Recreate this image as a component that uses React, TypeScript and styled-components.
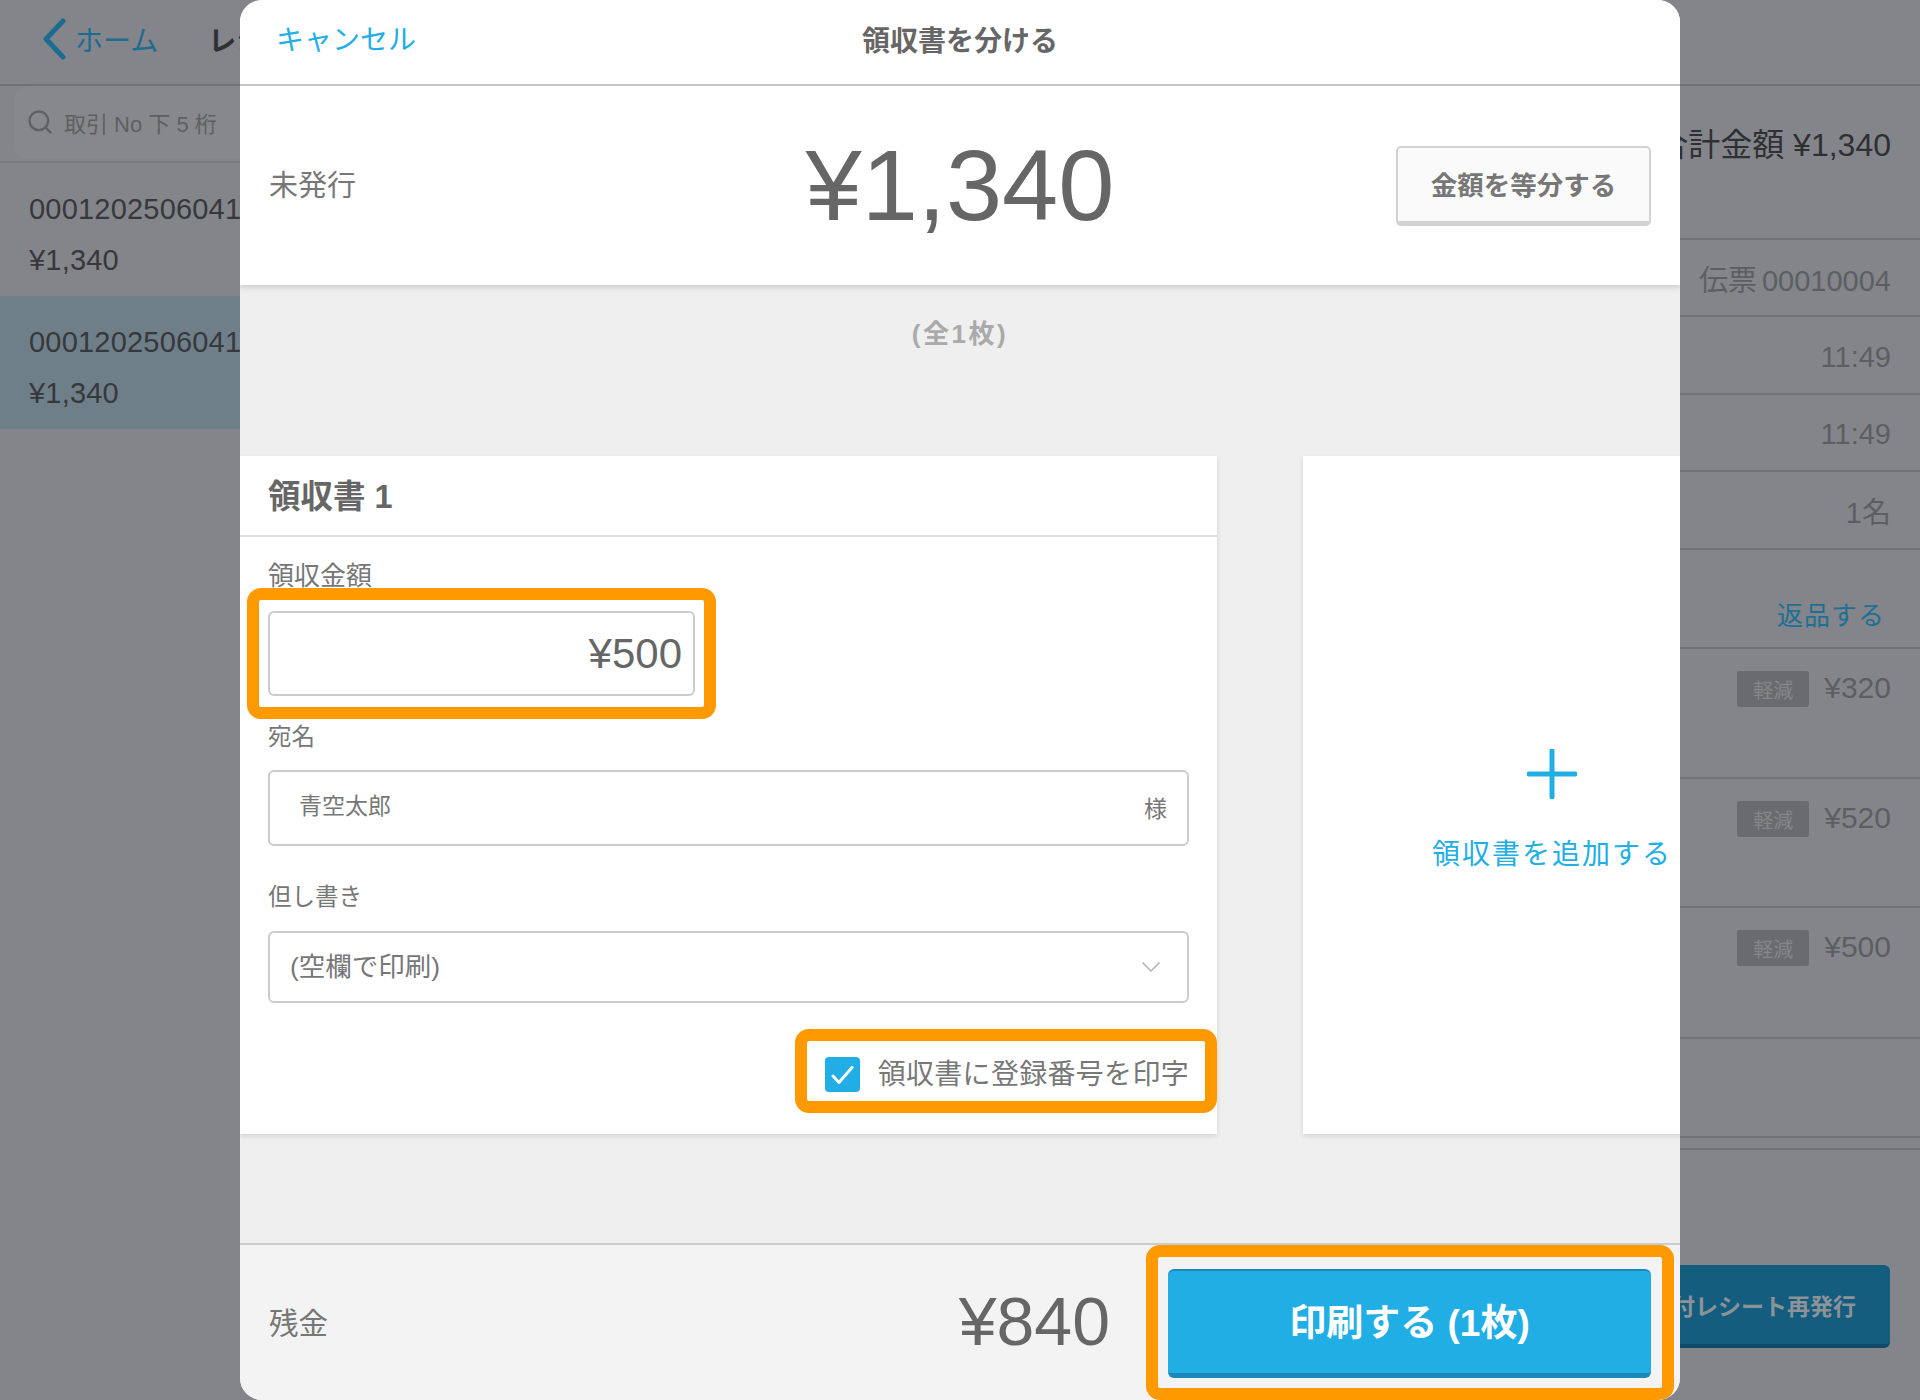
import React from 'react';
import styled, { createGlobalStyle } from 'styled-components';
import { ChevronDown, Search } from 'lucide-react';

const FONT = '"Liberation Sans", "Noto Sans CJK JP", sans-serif';
const BLUE = '#20aee5';
const ORANGE = '#ff9900';

const GlobalStyle = createGlobalStyle`
    html, body {
        margin: 0;
        padding: 0;
        background: #84858a;
        font-family: ${FONT};
    }
    * {
        box-sizing: border-box;
    }
`;

const Screen = styled.div`
    position: relative;
    width: 1920px;
    height: 1400px;
    overflow: hidden;
    display: grid;
    grid-template-columns: 240px 1fr;
    grid-template-rows: 86px 1fr;
    background: #84858a;
`;

const TopBar = styled.div`
    grid-column: 1 / 3;
    display: flex;
    align-items: center;
    padding: 0 0 6px 41px;
    border-bottom: 2px solid #707175;
    font-size: 28px;
`;

const BackLink = styled.div`
    display: flex;
    align-items: center;
    gap: 8px;
    color: #1b6c90;
`;

const BackTitle = styled.div`
    margin-left: 50px;
    font-weight: 700;
    color: #303134;
`;

const Sidebar = styled.div`
    display: flex;
    flex-direction: column;
    overflow: hidden;
`;

const SearchRow = styled.div`
    flex: none;
    height: 77px;
    padding: 1px 0 2px 15px;
    border-bottom: 2px solid #7a7b7f;
`;

const SearchField = styled.div`
    width: 400px;
    height: 100%;
    display: flex;
    align-items: center;
    gap: 10px;
    padding: 0 0 2px 11px;
    border-radius: 10px;
    background: #87888c;
    color: #5e5f62;
    font-size: 22px;
    white-space: nowrap;
`;

const SaleRow = styled.div<{ $selected?: boolean }>`
    flex: none;
    height: 133px;
    padding: 21px 0 0 29px;
    white-space: nowrap;
    font-size: 29px;
    line-height: 51px;
    letter-spacing: 0.2px;
    color: #37383b;
    background: ${props => (props.$selected ? '#6f7f8a' : 'transparent')};
`;

const Detail = styled.div`
    display: flex;
    flex-direction: column;
`;

const DetailRow = styled.div<{ $height: number; $dim?: boolean; $top?: boolean; $shift?: number }>`
    flex: none;
    height: ${props => props.$height}px;
    display: flex;
    justify-content: flex-end;
    align-items: ${props => (props.$top ? 'flex-start' : 'center')};
    gap: 15px;
    padding: ${props => (props.$top ? '22px 29px 0 0' : `${props.$shift ?? 0}px 29px 0 0`)};
    border-bottom: 2px solid #717276;
    font-size: ${props => (props.$top ? 30 : 29)}px;
    word-spacing: -3px;
    color: ${props => (props.$dim ? '#5d5e62' : '#2f3033')};
`;

const TotalText = styled.div`
    font-size: 32px;
    word-spacing: 0;
    margin-bottom: 40px;
`;

const ReturnLink = styled.div`
    color: #1f6f94;
    font-size: 26px;
    letter-spacing: 1px;
    margin-top: 30px;
    padding-right: 6px;
`;

const TaxBadge = styled.div`
    width: 72px;
    height: 36px;
    display: flex;
    align-items: center;
    justify-content: center;
    border-radius: 3px;
    background: #696b6f;
    color: #85868a;
    font-size: 20px;
`;

const Reissue = styled.div`
    align-self: flex-end;
    width: 600px;
    height: 83px;
    margin: 115px 30px 0 0;
    display: flex;
    align-items: center;
    justify-content: flex-end;
    padding-right: 34px;
    border-radius: 6px;
    background: #155d7f;
    border-bottom: 4px solid #10496a;
    color: #8b9298;
    font-size: 23px;
    font-weight: 700;
`;

const Modal = styled.div`
    position: absolute;
    top: 0;
    left: 240px;
    width: 1440px;
    height: 1400px;
    display: flex;
    flex-direction: column;
    overflow: hidden;
    border-radius: 22px;
    background: #efefef;
`;

const ModalHeader = styled.div`
    position: relative;
    flex: none;
    height: 86px;
    display: flex;
    align-items: center;
    justify-content: center;
    background: #fff;
    border-bottom: 2px solid #cbcbcb;
`;

const CancelLink = styled.div`
    position: absolute;
    left: 36px;
    top: 21px;
    color: ${BLUE};
    font-size: 28px;
    line-height: 40px;
`;

const ModalTitle = styled.div`
    font-size: 28px;
    font-weight: 700;
    color: #666;
    margin-top: -6px;
`;

const Summary = styled.div`
    flex: none;
    height: 199px;
    display: grid;
    grid-template-columns: 1fr auto 1fr;
    align-items: center;
    padding: 0 29px;
    background: #fff;
    box-shadow: 0 2px 6px rgba(0, 0, 0, 0.16);
    z-index: 1;
`;

const SummaryLabel = styled.div`
    font-size: 29px;
    color: #777;
    margin-top: -5px;
`;

const SummaryAmount = styled.div`
    font-size: 101px;
    line-height: 1;
    color: #666;
`;

const SplitButton = styled.div`
    justify-self: end;
    width: 255px;
    height: 80px;
    display: flex;
    align-items: center;
    justify-content: center;
    padding-bottom: 2px;
    border: 2px solid #d2d2d2;
    border-bottom-width: 5px;
    border-radius: 5px;
    background: #fafafa;
    color: #777;
    font-size: 26.5px;
    font-weight: 700;
`;

const SheetCount = styled.div`
    flex: none;
    height: 98px;
    padding-top: 31px;
    text-align: center;
    font-size: 26px;
    line-height: 36px;
    letter-spacing: 2.5px;
    font-weight: 700;
    color: #aaa;
`;

const Sheets = styled.div`
    flex: none;
    height: 73px;
`;

const CardRow = styled.div`
    flex: none;
    height: 678px;
    display: flex;
    gap: 86px;
`;

const ReceiptCard = styled.div`
    flex: none;
    width: 977px;
    background: #fff;
    box-shadow: 0 2px 5px rgba(0, 0, 0, 0.12);
`;

const CardTitle = styled.div`
    height: 81px;
    display: flex;
    align-items: center;
    padding: 0 0 4px 28px;
    border-bottom: 2px solid #ddd;
    color: #666;
    font-size: 32.5px;
    font-weight: 700;
`;

const CardBody = styled.div`
    padding: 23px 28px 0 28px;
`;

const FieldLabel = styled.div<{ $size?: number; $gap: number; $top?: number }>`
    position: relative;
    font-size: ${props => props.$size ?? 23.5}px;
    line-height: 32px;
    color: #777;
    margin-top: ${props => props.$top ?? 0}px;
    margin-bottom: ${props => props.$gap}px;
`;

const Highlight = styled.div<{ $inset: string }>`
    position: absolute;
    inset: ${props => props.$inset};
    border: 12px solid ${ORANGE};
    border-radius: 14px;
    pointer-events: none;
`;

const Marked = styled.div<{ $width?: number }>`
    position: relative;
    width: ${props => (props.$width ? `${props.$width}px` : 'auto')};
`;

const InputBox = styled.div<{ $height: number }>`
    width: 100%;
    height: ${props => props.$height}px;
    display: flex;
    align-items: center;
    justify-content: space-between;
    border: 2px solid #ccc;
    border-radius: 6px;
    background: #fff;
    color: #777;
`;

const AmountValue = styled.div`
    width: 100%;
    padding-right: 11px;
    text-align: right;
    font-size: 42px;
    color: #666;
`;

const NameValue = styled.div`
    padding: 0 0 8px 29px;
    font-size: 23px;
`;

const NameSuffix = styled.div`
    padding: 0 20px 2px 0;
    font-size: 23px;
`;

const NoteValue = styled.div`
    padding: 0 0 6px 20px;
    font-size: 26.5px;
`;

const NoteChevron = styled.div`
    display: flex;
    padding-right: 20px;
    color: #b5b5b5;
`;

const CheckRow = styled.div`
    display: flex;
    justify-content: flex-end;
    margin-top: 54px;
`;

const CheckLabel = styled.div`
    display: flex;
    align-items: center;
    gap: 18px;
    font-size: 28px;
    line-height: 35px;
    letter-spacing: 0.3px;
    color: #777;
`;

const CheckBox = styled.div`
    width: 35px;
    height: 35px;
    display: flex;
    align-items: center;
    justify-content: center;
    border-radius: 4px;
    background: ${BLUE};
`;

const AddCard = styled.div`
    flex: none;
    width: 498px;
    display: flex;
    flex-direction: column;
    align-items: center;
    padding-top: 293px;
    background: #fff;
    box-shadow: 0 2px 5px rgba(0, 0, 0, 0.12);
`;

const AddLabel = styled.div`
    margin-top: 36px;
    color: ${BLUE};
    font-size: 28px;
    line-height: 40px;
    letter-spacing: 2px;
    white-space: nowrap;
`;

const Footer = styled.div`
    flex: none;
    margin-top: 109px;
    height: 157px;
    display: flex;
    align-items: center;
    padding: 0 29px;
    border-top: 2px solid #ccc;
    background: #f3f3f3;
`;

const RemainLabel = styled.div`
    font-size: 29.5px;
    color: #777;
    margin-top: -4px;
`;

const RemainValue = styled.div`
    margin: -4px 0 0 auto;
    font-size: 68px;
    color: #666;
`;

const PrintArea = styled.div`
    position: relative;
    margin: 2px 0 0 58px;
`;

const PrintButton = styled.div`
    width: 483px;
    height: 109px;
    display: flex;
    align-items: center;
    justify-content: center;
    padding-bottom: 4px;
    border-radius: 6px;
    background: ${BLUE};
    border-top: 2px solid #1b89b9;
    border-bottom: 5px solid #1b89b9;
    color: #fff;
    font-size: 37px;
    font-weight: 700;
`;

const SALES = [false, true];
const ITEMS = [
    { price: '¥320', height: 130 },
    { price: '¥520', height: 129 },
    { price: '¥500', height: 131 },
];

const App = () => (
    <Screen>
        <GlobalStyle />
        <TopBar>
            <BackLink>
                <svg width="26" height="42" viewBox="0 0 26 42" fill="none">
                    <path
                        d="M22 3 L5 21 L22 39"
                        stroke="#1b6c90"
                        strokeWidth="5"
                        strokeLinecap="round"
                        strokeLinejoin="round"
                    />
                </svg>
                ホーム
            </BackLink>
            <BackTitle>レシ</BackTitle>
        </TopBar>
        <Sidebar>
            <SearchRow>
                <SearchField>
                    <Search size={28} strokeWidth={2} />
                    取引 No 下 5 桁
                </SearchField>
            </SearchRow>
            {SALES.map((selected, i) => (
                <SaleRow key={i} $selected={selected}>
                    0001202506041
                    <br />
                    ¥1,340
                </SaleRow>
            ))}
        </Sidebar>
        <Detail>
            <DetailRow $height={154}>
                <TotalText>合計金額 ¥1,340</TotalText>
            </DetailRow>
            <DetailRow $height={77} $dim>
                伝票 00010004
            </DetailRow>
            <DetailRow $height={78} $dim $shift={4}>
                11:49
            </DetailRow>
            <DetailRow $height={77} $dim $shift={4}>
                11:49
            </DetailRow>
            <DetailRow $height={78} $dim>
                1名
            </DetailRow>
            <DetailRow $height={99}>
                <ReturnLink>返品する</ReturnLink>
            </DetailRow>
            {ITEMS.map(item => (
                <DetailRow key={item.price} $height={item.height} $dim $top>
                    <TaxBadge>軽減</TaxBadge>
                    {item.price}
                </DetailRow>
            ))}
            <DetailRow $height={99} />
            <DetailRow $height={12} />
            <Reissue>領収書付レシート再発行</Reissue>
        </Detail>
        <Modal>
            <ModalHeader>
                <CancelLink>キャンセル</CancelLink>
                <ModalTitle>領収書を分ける</ModalTitle>
            </ModalHeader>
            <Summary>
                <SummaryLabel>未発行</SummaryLabel>
                <SummaryAmount>¥1,340</SummaryAmount>
                <SplitButton>金額を等分する</SplitButton>
            </Summary>
            <SheetCount>(全1枚)</SheetCount>
            <Sheets />
            <CardRow>
                <ReceiptCard>
                    <CardTitle>領収書 1</CardTitle>
                    <CardBody>
                        <FieldLabel $size={26} $gap={19}>
                            領収金額
                        </FieldLabel>
                        <Marked $width={427}>
                            <InputBox $height={85}>
                                <AmountValue>¥500</AmountValue>
                            </InputBox>
                            <Highlight $inset="-23px -21px -23px -21px" />
                        </Marked>
                        <FieldLabel $gap={17} $top={25}>
                            宛名
                        </FieldLabel>
                        <InputBox $height={76}>
                            <NameValue>青空太郎</NameValue>
                            <NameSuffix>様</NameSuffix>
                        </InputBox>
                        <FieldLabel $gap={18} $top={35}>
                            但し書き
                        </FieldLabel>
                        <InputBox $height={72}>
                            <NoteValue>(空欄で印刷)</NoteValue>
                            <NoteChevron>
                                <ChevronDown size={32} strokeWidth={1.3} />
                            </NoteChevron>
                        </InputBox>
                        <CheckRow>
                            <Marked>
                                <CheckLabel>
                                    <CheckBox>
                                        <svg width="24" height="24" viewBox="0 0 24 24" fill="none">
                                            <path
                                                d="M3 13 L9 19.5 L22 4.5"
                                                stroke="#fff"
                                                strokeWidth="3"
                                                strokeLinecap="round"
                                                strokeLinejoin="round"
                                            />
                                        </svg>
                                    </CheckBox>
                                    領収書に登録番号を印字
                                </CheckLabel>
                                <Highlight $inset="-28px -28px -21px -30px" />
                            </Marked>
                        </CheckRow>
                    </CardBody>
                </ReceiptCard>
                <AddCard>
                    <svg width="50" height="50" viewBox="0 0 50 50" fill="none">
                        <path
                            d="M25 2 V48 M2 25 H48"
                            stroke={BLUE}
                            strokeWidth="5"
                            strokeLinecap="round"
                        />
                    </svg>
                    <AddLabel>領収書を追加する</AddLabel>
                </AddCard>
            </CardRow>
            <Footer>
                <RemainLabel>残金</RemainLabel>
                <RemainValue>¥840</RemainValue>
                <PrintArea>
                    <PrintButton>印刷する (1枚)</PrintButton>
                    <Highlight $inset="-24px -23px -22px -22px" />
                </PrintArea>
            </Footer>
        </Modal>
    </Screen>
);

export default App;
